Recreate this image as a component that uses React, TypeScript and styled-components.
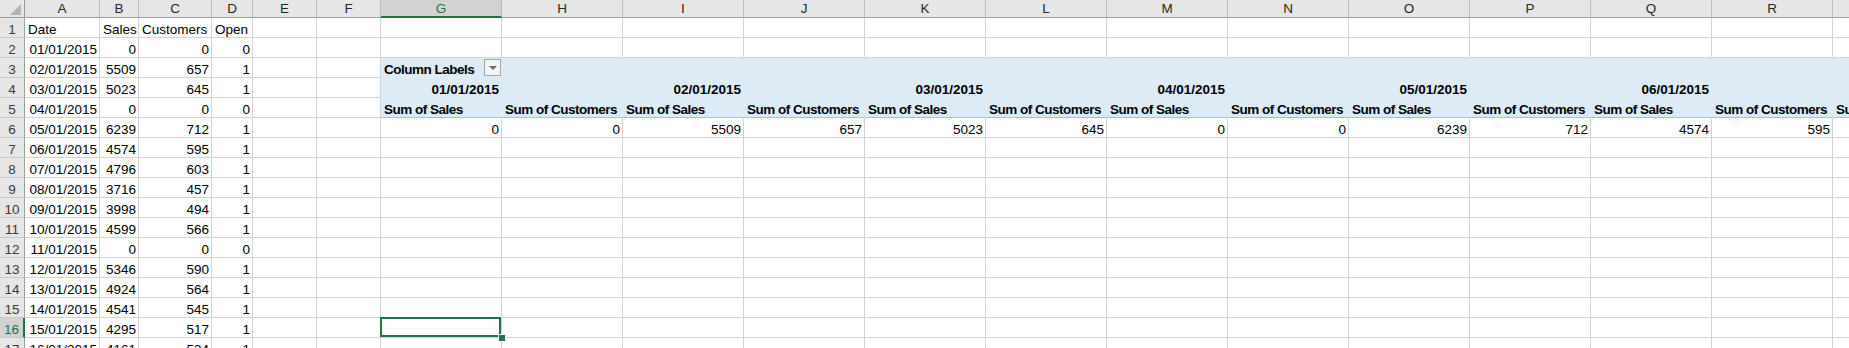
import React from 'react'
import styled, { createGlobalStyle, css } from 'styled-components'

const GREEN = '#217346'
const GRID = '#D4D4D4'
const PIVOT_BG = '#DDEBF7'
const PIVOT_LINE = '#9BC2E6'
const HEAD_BG = '#E6E6E6'
const HEAD_ACTIVE = '#D2D2D2'

const LETTERS = ['A', 'B', 'C', 'D', 'E', 'F', 'G', 'H', 'I', 'J', 'K', 'L', 'M', 'N', 'O', 'P', 'Q', 'R', 'S']

const SHEET: string[][] = [
  ['Date', 'Sales', 'Customers', 'Open'],
  ['01/01/2015', '0', '0', '0'],
  ['02/01/2015', '5509', '657', '1'],
  ['03/01/2015', '5023', '645', '1'],
  ['04/01/2015', '0', '0', '0'],
  ['05/01/2015', '6239', '712', '1'],
  ['06/01/2015', '4574', '595', '1'],
  ['07/01/2015', '4796', '603', '1'],
  ['08/01/2015', '3716', '457', '1'],
  ['09/01/2015', '3998', '494', '1'],
  ['10/01/2015', '4599', '566', '1'],
  ['11/01/2015', '0', '0', '0'],
  ['12/01/2015', '5346', '590', '1'],
  ['13/01/2015', '4924', '564', '1'],
  ['14/01/2015', '4541', '545', '1'],
  ['15/01/2015', '4295', '517', '1'],
  ['16/01/2015', '4161', '534', '1']
]

const PIVOT_DATES = ['01/01/2015', '02/01/2015', '03/01/2015', '04/01/2015', '05/01/2015', '06/01/2015', '07/01/2015']
const PIVOT_VALUES = ['0', '0', '5509', '657', '5023', '645', '0', '0', '6239', '712', '4574', '595', '4796']

const PIVOT_COL = 6
const ACTIVE_ROW = 16
const ACTIVE_COL = 6

interface CellData {
  text?: string
  align: 'left' | 'right'
  bold?: boolean
  tight?: boolean
  band?: 'head' | 'foot'
  filter?: boolean
}

const cellAt = (row: number, col: number): CellData => {
  if (col < 4) {
    const text = SHEET[row - 1]?.[col]
    return { text, align: row === 1 ? 'left' : 'right' }
  }
  if (col < PIVOT_COL) return { align: 'left' }

  const p = col - PIVOT_COL
  if (row === 3) {
    return p === 0
      ? { text: 'Column Labels', align: 'left', bold: true, tight: true, band: 'head', filter: true }
      : { align: 'left', band: 'head' }
  }
  if (row === 4) {
    return p % 2 === 0
      ? { text: PIVOT_DATES[p / 2], align: 'right', bold: true, band: 'head' }
      : { align: 'left', band: 'head' }
  }
  if (row === 5) {
    return { text: p % 2 === 0 ? 'Sum of Sales' : 'Sum of Customers', align: 'left', bold: true, tight: true, band: 'foot' }
  }
  if (row === 6) return { text: PIVOT_VALUES[p], align: 'right' }
  return { align: 'left' }
}

const GlobalStyle = createGlobalStyle`
  html, body {
    margin: 0;
    padding: 0;
    background: #ffffff;
    overflow: hidden;
  }
  body {
    font-family: "Liberation Sans", Arial, sans-serif;
    font-size: 13.5px;
    color: #000000;
  }
`

const Sheet = styled.div`
  width: 1849px;
  height: 348px;
  overflow: hidden;
`

const Grid = styled.div`
  display: grid;
  grid-template-columns: 25px 75px 39px 73px 41px 64px 64px repeat(13, 121px);
  grid-template-rows: 18px;
  grid-auto-rows: 20px;
  width: max-content;
`

const Corner = styled.div`
  box-sizing: border-box;
  display: flex;
  align-items: flex-end;
  justify-content: flex-end;
  padding: 0 3px 2px 0;
  background: ${HEAD_BG};
  border-right: 1px solid #9e9e9e;
  border-bottom: 1px solid #9e9e9e;
`

const CornerMark = styled.span`
  width: 11px;
  height: 11px;
  background: #b4b4b4;
  clip-path: polygon(100% 0, 100% 100%, 0 100%);
`

const ColHead = styled.div<{ $active: boolean }>`
  box-sizing: border-box;
  display: flex;
  align-items: center;
  justify-content: center;
  line-height: 17px;
  background: ${p => (p.$active ? HEAD_ACTIVE : HEAD_BG)};
  color: ${p => (p.$active ? GREEN : '#262626')};
  border-right: 1px solid #bdbdbd;
  border-bottom: ${p => (p.$active ? `2px solid ${GREEN}` : '1px solid #9e9e9e')};
`

const RowHead = styled.div<{ $active: boolean }>`
  box-sizing: border-box;
  display: flex;
  align-items: flex-end;
  justify-content: center;
  line-height: 15px;
  background: ${p => (p.$active ? HEAD_ACTIVE : HEAD_BG)};
  color: ${p => (p.$active ? GREEN : '#3a3a3a')};
  border-bottom: 1px solid #c8c8c8;
  border-right: ${p => (p.$active ? `2px solid ${GREEN}` : '1px solid #9e9e9e')};
`

const bandStyles = {
  head: css`
    background: ${PIVOT_BG};
    border-right-color: ${PIVOT_BG};
    border-bottom-color: ${PIVOT_BG};
  `,
  foot: css`
    background: ${PIVOT_BG};
    border-right-color: ${PIVOT_BG};
    border-bottom-color: ${PIVOT_LINE};
  `
}

const Cell = styled.div<{ $align: 'left' | 'right'; $bold: boolean; $tight: boolean; $band?: 'head' | 'foot' }>`
  box-sizing: border-box;
  position: relative;
  display: flex;
  align-items: flex-end;
  justify-content: ${p => (p.$align === 'right' ? 'flex-end' : 'space-between')};
  padding: 0 2px 0 3px;
  line-height: 15px;
  white-space: nowrap;
  font-weight: ${p => (p.$bold ? 700 : 400)};
  letter-spacing: ${p => (p.$tight ? '-0.5px' : 'normal')};
  background: #ffffff;
  border-right: 1px solid ${GRID};
  border-bottom: 1px solid ${GRID};
  ${p => p.$band && bandStyles[p.$band]}
`

const FilterButton = styled.span`
  box-sizing: border-box;
  align-self: center;
  display: flex;
  align-items: center;
  justify-content: center;
  width: 17px;
  height: 17px;
  margin-right: -2px;
  background: #f4f4f4;
  border: 1px solid #a6a6a6;
`

const FilterArrow = styled.span`
  width: 0;
  height: 0;
  border-left: 4px solid transparent;
  border-right: 4px solid transparent;
  border-top: 4px solid #6b6b6b;
`

const Selection = styled.span`
  position: absolute;
  left: -1px;
  top: -1px;
  width: calc(100% + 1px);
  height: calc(100% + 1px);
  box-sizing: border-box;
  border: 2px solid ${GREEN};
  z-index: 2;
  pointer-events: none;
`

const FillHandle = styled.span`
  position: absolute;
  right: -4px;
  bottom: -4px;
  width: 6px;
  height: 6px;
  background: ${GREEN};
  outline: 1px solid #ffffff;
  z-index: 3;
`

const rows = Array.from({ length: 17 }, (_, i) => i + 1)

export default function App() {
  return (
    <>
      <GlobalStyle />
      <Sheet>
        <Grid>
          <Corner>
            <CornerMark />
          </Corner>
          {LETTERS.map((l, c) => (
            <ColHead key={l} $active={c === ACTIVE_COL}>
              {l}
            </ColHead>
          ))}
          {rows.map(r => (
            <React.Fragment key={r}>
              <RowHead $active={r === ACTIVE_ROW}>{r}</RowHead>
              {LETTERS.map((l, c) => {
                const d = cellAt(r, c)
                const selected = r === ACTIVE_ROW && c === ACTIVE_COL
                return (
                  <Cell key={l} $align={d.align} $bold={!!d.bold} $tight={!!d.tight} $band={d.band}>
                    {d.text !== undefined && <span>{d.text}</span>}
                    {d.filter && (
                      <FilterButton>
                        <FilterArrow />
                      </FilterButton>
                    )}
                    {selected && (
                      <>
                        <Selection />
                        <FillHandle />
                      </>
                    )}
                  </Cell>
                )
              })}
            </React.Fragment>
          ))}
        </Grid>
      </Sheet>
    </>
  )
}
